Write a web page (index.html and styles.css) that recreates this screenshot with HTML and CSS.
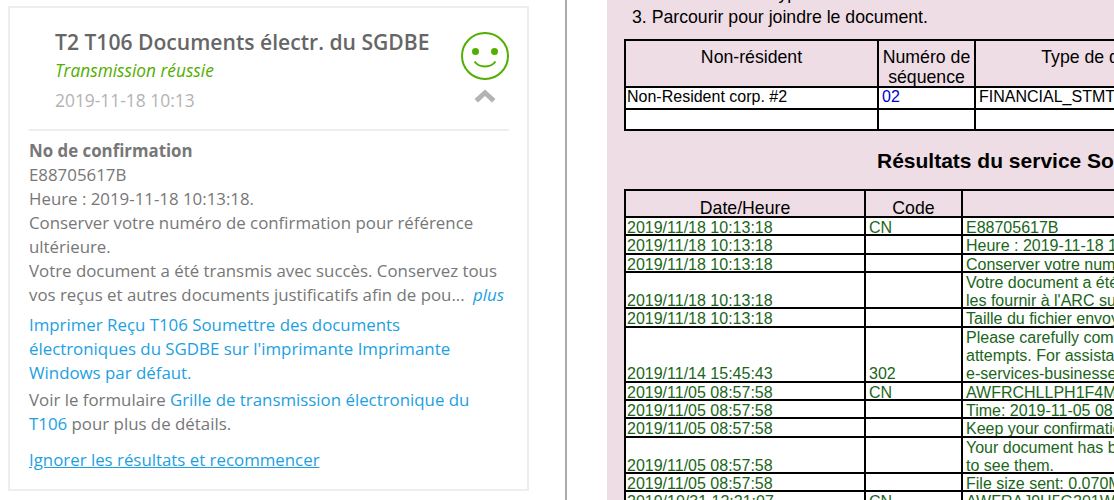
FILE: index.html
```html
<!DOCTYPE html>
<html lang="fr">
<head>
<meta charset="utf-8">
<title>Résultats</title>
<link rel="stylesheet" href="styles.css">
</head>
<body>
<div class="page">
  <aside class="side">
    <section class="card">
      <header class="card-head">
        <div class="head-text">
          <h2 class="title">T2 T106 Documents électr. du SGDBE</h2>
          <p class="status">Transmission réussie</p>
          <p class="stamp">2019-11-18 10:13</p>
        </div>
        <div class="head-icons">
          <svg class="smile" width="50" height="50" viewBox="0 0 50 50" aria-hidden="true">
            <circle cx="25" cy="25" r="23" fill="none" stroke="#52ae00" stroke-width="2"/>
            <circle cx="15.500" cy="20.500" r="3.500" fill="#52ae00"/>
            <circle cx="34.500" cy="20.500" r="3.500" fill="#52ae00"/>
            <path d="M14.500 30.500c2.500 3.500 6 5 10.500 5s8-1.500 10.500-5" fill="none" stroke="#52ae00" stroke-width="2"/>
          </svg>
          <svg class="chevron" width="22" height="14" viewBox="0 0 22 14" aria-hidden="true">
            <path d="M11 0.500 21.500 10 18 13.500 11 7 4 13.500 0.500 10Z" fill="#b3b3b3"/>
          </svg>
        </div>
      </header>
      <div class="card-body">
        <p class="para"><strong>No de confirmation</strong><br>E88705617B<br>Heure : 2019-11-18 10:13:18.<br>Conserver votre numéro de confirmation pour référence ultérieure.<br>Votre document a été transmis avec succès. Conservez tous vos reçus et autres documents justificatifs afin de pou... <a class="more" href="#">plus</a></p>
        <p class="para gap"><a href="#">Imprimer Reçu T106 Soumettre des documents électroniques du SGDBE sur l'imprimante Imprimante Windows par défaut.</a></p>
        <p class="para gap">Voir le formulaire <a href="#">Grille de transmission électronique du T106</a> pour plus de détails.</p>
        <p class="para reset"><a class="under" href="#">Ignorer les résultats et recommencer</a></p>
      </div>
    </section>
  </aside>
  <main class="main">
    <div class="panel">
      <p class="step clipped">2. Sélectionner le type de document.</p>
      <p class="step">3. Parcourir pour joindre le document.</p>
      <table class="grid grid-top">
        <colgroup><col class="c253"><col class="c97"><col class="c278"></colgroup>
        <tr class="th"><td><div class="in">Non-résident</div></td><td><div class="in">Numéro de séquence</div></td><td><div class="in">Type de document</div></td></tr>
        <tr class="wh"><td><div class="in">Non-Resident corp. #2</div></td><td><div class="in"><a class="seq" href="#">02</a></div></td><td><div class="in">FINANCIAL_STMT</div></td></tr>
        <tr class="wh"><td><div class="in">&nbsp;</div></td><td><div class="in">&nbsp;</div></td><td><div class="in">&nbsp;</div></td></tr>
      </table>
      <h3 class="results-title">Résultats du service Soumettre</h3>
      <table class="grid log">
        <colgroup><col class="c240"><col class="c97"><col class="c400"></colgroup>
        <tr class="th"><td><div class="in">Date/Heure</div></td><td><div class="in">Code</div></td><td><div class="in">&nbsp;</div></td></tr>
        <tr><td><div class="in">2019/11/18 10:13:18</div></td><td><div class="in">CN</div></td><td><div class="in">E88705617B</div></td></tr>
        <tr><td><div class="in">2019/11/18 10:13:18</div></td><td></td><td><div class="in">Heure : 2019-11-18 10:13:18.</div></td></tr>
        <tr><td><div class="in">2019/11/18 10:13:18</div></td><td></td><td><div class="in">Conserver votre numéro de confirmation</div></td></tr>
        <tr><td><div class="in">2019/11/18 10:13:18</div></td><td></td><td><div class="in">Votre document a été transmis avec succès<br>les fournir à l'ARC sur demande.</div></td></tr>
        <tr><td><div class="in">2019/11/18 10:13:18</div></td><td></td><td><div class="in">Taille du fichier envoyé : 0.070 Mo</div></td></tr>
        <tr><td><div class="in">2019/11/14 15:45:43</div></td><td><div class="in">302</div></td><td><div class="in">Please carefully complete the form<br>attempts. For assistance, contact<br>e-services-businesses@cra.gc.ca</div></td></tr>
        <tr><td><div class="in">2019/11/05 08:57:58</div></td><td><div class="in">CN</div></td><td><div class="in">AWFRCHLLPH1F4M</div></td></tr>
        <tr><td><div class="in">2019/11/05 08:57:58</div></td><td></td><td><div class="in">Time: 2019-11-05 08:57:58.</div></td></tr>
        <tr><td><div class="in">2019/11/05 08:57:58</div></td><td></td><td><div class="in">Keep your confirmation number</div></td></tr>
        <tr><td><div class="in">2019/11/05 08:57:58</div></td><td></td><td><div class="in">Your document has been sent successfully<br>to see them.</div></td></tr>
        <tr><td><div class="in">2019/11/05 08:57:58</div></td><td></td><td><div class="in">File size sent: 0.070MB</div></td></tr>
        <tr><td><div class="in">2019/10/31 12:21:07</div></td><td><div class="in">CN</div></td><td><div class="in">AWFRAJ9H5G201W</div></td></tr>
      </table>
    </div>
  </main>
</div>
</body>
</html>
```
FILE: styles.css
```css
* { box-sizing: border-box; }
html, body { margin: 0; height: 500px; overflow: hidden; background: #fff; }
a { text-decoration: none; }
p, h2, h3 { margin: 0; }

.page { display: flex; width: 1114px; height: 500px; overflow: hidden; }

.side { width: 567px; flex: none; height: 500px; padding: 6px 0 0 8px; border-right: 2px solid #aaa; }
.card { width: 521px; height: 485px; border: 2px solid #eee; padding: 0 18px 0 19px; font-family: "Open Sans", sans-serif; color: #777; font-size: 16.850px; line-height: 24px; }

.card-head { display: flex; justify-content: space-between; height: 123px; border-bottom: 2px solid #eee; padding: 18px 0 0 26px; }
.title { font-size: 21.100px; line-height: 32px; font-weight: 600; color: #666; white-space: nowrap; }
.status { font-style: italic; color: #52ae00; font-size: 17.300px; line-height: 24px; margin-top: 1px; }
.stamp { color: #b3b3b3; font-size: 17.400px; line-height: 24px; margin-top: 5px; }
.head-icons { display: flex; flex-direction: column; align-items: center; padding-top: 5px; margin-right: -1px; }
.chevron { margin-top: 8px; }

.card-body { padding-top: 8px; }
.para a { color: #1ba1e2; }
.para .more { font-style: italic; margin-left: 4px; }
.para strong { font-weight: 700; color: #777; }
.gap { margin-top: 6px; }
.gap + .gap { margin-top: 3px; }
.reset { margin-top: 12px; }
.under { text-decoration: underline; }

.main { flex: 1; min-width: 0; padding-left: 40px; overflow: hidden; }
.panel { width: 600px; height: 500px; background: #efdde6; padding-left: 17px; overflow: hidden; font-family: "Liberation Sans", Arial, sans-serif; font-size: 16px; color: #000; }
.step { font-size: 17.700px; line-height: 20px; padding-left: 8px; white-space: nowrap; }
.clipped { margin-top: -17px; margin-bottom: 4px; }
.grid { border-collapse: collapse; table-layout: fixed; width: 628px; }
.log { width: 737px; }
.grid td { border: 2px solid #000; padding: 0 1px; vertical-align: bottom; white-space: nowrap; overflow: hidden; }
.grid td + td { padding-left: 3px; }
.in { margin: 1px 0 -3px; line-height: 18.300px; }
.grid-top { margin-top: 12px; }
.c253 { width: 253px; }
.c97 { width: 97px; }
.c240 { width: 240px; }
.c278 { width: 278px; }
.c400 { width: 400px; }
.grid .th td { text-align: center; white-space: normal; font-size: 17.700px; padding-left: 1px; }
.grid .th .in { line-height: 20px; margin: 0 0 -2px; }
.wh td, .log tr:not(.th) td { background: #fff; }
.grid-top .th td { height: 47px; vertical-align: top; padding-top: 6px; }
.grid-top .wh .in { line-height: 21.500px; margin: -2px 0 0; }
.seq { color: #00c; }
.results-title { font-size: 21px; line-height: 22px; font-weight: 700; margin: 19px 0 17px 253px; white-space: nowrap; }
.log tr:not(.th) td { color: #1a661a; }
.log .th td { height: 27px; }
```
